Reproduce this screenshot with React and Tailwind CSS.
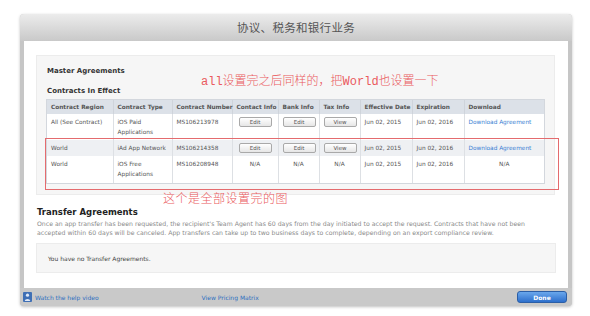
import React from "react";

const cols = [66, 59, 60, 46, 41, 41, 52, 52, 80];

function Btn({ children }) {
  return (
    <span className="inline-block w-[33px] h-[10px] leading-[9px] text-center border border-[#a9a9a9] rounded-[2px] bg-gradient-to-b from-white to-[#e6e6e6] text-[#555] text-[5.5px]">
      {children}
    </span>
  );
}

export default function App() {
  const cell = "align-top pt-[3px] pb-[3px] px-[4px] leading-[10px] border-l border-[#dde0e4] first:border-l-0";
  const cc = cell + " text-center";
  return (
    <div className="w-[590px] h-[316px] bg-white pt-[14px] pl-[20px] font-['DejaVu_Sans',sans-serif]">
      <div className="w-[552px] h-[292px] flex flex-col rounded-[4px] bg-[#c6c6c6] shadow-[0_1px_3px_rgba(0,0,0,0.25)] overflow-hidden">
        {/* header */}
        <div className="h-[27px] shrink-0 flex items-center justify-center bg-gradient-to-b from-[#ececec] to-[#c9c9c9]">
          <span className="font-['Noto_Sans_CJK_SC',sans-serif] text-[11.5px] text-[#555] tracking-[0.3px]">协议、税务和银行业务</span>
        </div>
        {/* body */}
        <div className="mx-[4px] h-[247px] shrink-0 bg-white relative pt-[14px] pl-[12px]">
          <div className="relative w-[519px] h-[140px] bg-[#f6f6f6] border border-[#ececec] pl-[10px] pt-[10px]">
            <div className="text-[7px] font-bold text-[#333] leading-[10px]">Master Agreements</div>
            <div className="mt-[10px] text-[7px] font-bold text-[#333] leading-[10px]">Contracts In Effect</div>
            <table className="mt-[4px] w-[497px] table-fixed border-collapse bg-white text-[5.8px] text-[#555] outline outline-1 outline-[#d3d7dd]">
              <colgroup>
                {cols.map((w, i) => (
                  <col key={i} style={{ width: w }} />
                ))}
              </colgroup>
              <thead>
                <tr className="bg-[#dce1e8] h-[14px] text-[#555] font-bold">
                  {["Contract Region", "Contract Type", "Contract Number", "Contact Info", "Bank Info", "Tax Info", "Effective Date", "Expiration", "Download"].map((h) => (
                    <th key={h} className="text-left font-bold px-[4px] leading-[14px] whitespace-nowrap border-l border-[#cfd4db] first:border-l-0">{h}</th>
                  ))}
                </tr>
              </thead>
              <tbody>
                <tr className="h-[26px]">
                  <td className={cell}>All (See Contract)</td>
                  <td className={cell}>iOS Paid<br />Applications</td>
                  <td className={cell}>MS106213978</td>
                  <td className={cc}><Btn>Edit</Btn></td>
                  <td className={cc}><Btn>Edit</Btn></td>
                  <td className={cc}><Btn>View</Btn></td>
                  <td className={cell}>Jun 02, 2015</td>
                  <td className={cell}>Jun 02, 2016</td>
                  <td className={cell + " text-[#3b7fd3]"}>Download Agreement</td>
                </tr>
                <tr className="h-[16px] bg-[#eef0f3]">
                  <td className={cell}>World</td>
                  <td className={cell + " whitespace-nowrap"}>iAd App Network</td>
                  <td className={cell}>MS106214358</td>
                  <td className={cc}><Btn>Edit</Btn></td>
                  <td className={cc}><Btn>Edit</Btn></td>
                  <td className={cc}><Btn>View</Btn></td>
                  <td className={cell}>Jun 02, 2015</td>
                  <td className={cell}>Jun 02, 2016</td>
                  <td className={cell + " text-[#3b7fd3]"}>Download Agreement</td>
                </tr>
                <tr className="h-[27px]">
                  <td className={cell}>World</td>
                  <td className={cell}>iOS Free<br />Applications</td>
                  <td className={cell}>MS106208948</td>
                  <td className={cc}>N/A</td>
                  <td className={cc}>N/A</td>
                  <td className={cc}>N/A</td>
                  <td className={cell}>Jun 02, 2015</td>
                  <td className={cell}>Jun 02, 2016</td>
                  <td className={cc}>N/A</td>
                </tr>
              </tbody>
            </table>
            {/* annotation box */}
            <div className="absolute left-[8px] top-[82px] w-[514px] h-[52px] border-[1.5px] border-[#e46b6e] pointer-events-none" />
            <div className="absolute left-[164px] top-[19px] text-[12px] leading-[14px] text-[#ea5a5e] font-light font-['Liberation_Mono','Noto_Sans_CJK_SC',monospace] whitespace-nowrap">
              all设置完之后同样的，把World也设置一下
            </div>
          </div>
          <div className="absolute left-[139px] top-[150px] text-[12px] leading-[14px] text-[#ea5a5e] font-light font-['Noto_Sans_CJK_SC',sans-serif] tracking-[0.5px] whitespace-nowrap">
            这个是全部设置完的图
          </div>
          {/* transfer */}
          <div className="mt-[12px] pl-[1px] text-[8.5px] font-bold text-[#222] leading-[10px]">Transfer Agreements</div>
          <div className="mt-[2px] pl-[1px] text-[6.2px] text-[#8a8a8a] leading-[9px] whitespace-nowrap">
            <div>Once an app transfer has been requested, the recipient's Team Agent has 60 days from the day initiated to accept the request. Contracts that have not been</div>
            <div>accepted within 60 days will be canceled. App transfers can take up to two business days to complete, depending on an export compliance review.</div>
          </div>
          <div className="mt-[6px] w-[520px] h-[30px] bg-[#f6f6f6] border border-[#ececec] flex items-center pl-[11px] text-[6px] text-[#444]">
            You have no Transfer Agreements.
          </div>
        </div>
        {/* footer */}
        <div className="flex-1 flex items-center pl-[3px] pr-[5px] bg-[#c9c9c9]">
          <svg width="9" height="10" viewBox="0 0 9 10" className="shrink-0">
            <rect x="0" y="0" width="9" height="10" rx="1" fill="#3f6fb5" />
            <circle cx="4.5" cy="3.2" r="1.6" fill="#dfe9f7" />
            <path d="M1.8 9 C1.8 6.2 7.2 6.2 7.2 9 Z" fill="#dfe9f7" />
          </svg>
          <span className="ml-[3px] text-[6px] text-[#2f6fc0]">Watch the help video</span>
          <span className="ml-[103px] text-[6px] text-[#2f6fc0]">View Pricing Matrix</span>
          <div className="ml-auto w-[50px] h-[12px] rounded-[3px] border border-[#2b5ea6] bg-gradient-to-b from-[#6aa7ec] to-[#2d6fcc] flex items-center justify-center text-white font-bold text-[6px]">
            Done
          </div>
        </div>
      </div>
    </div>
  );
}
